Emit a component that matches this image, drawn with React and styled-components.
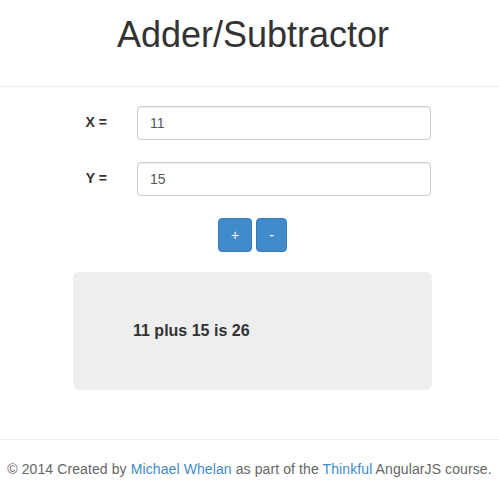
import React from "react";
import styled, { createGlobalStyle } from "styled-components";

const Global = createGlobalStyle`
  html, body { margin: 0; padding: 0; background: #fff; }
  body {
    font-family: "Liberation Sans", Arial, Helvetica, sans-serif;
    font-size: 14px;
    line-height: 1.428571;
    color: #333;
  }
  * { box-sizing: border-box; }
`;

const Header = styled.header`
  padding: 15px 0 31px 7px;
  border-bottom: 1px solid #eee;
  text-align: center;
`;

const Title = styled.h1`
  margin: 0;
  font-size: 36px;
  line-height: 40px;
  font-weight: 400;
  color: #333;
`;

const Page = styled.div`
  padding-left: 6px;
`;

const Main = styled.main`
  width: 359px;
  margin: 0 auto;
  padding-top: 19px;
  display: flex;
  flex-direction: column;
  gap: 22px;
`;

const Row = styled.div`
  display: flex;
  align-items: center;
  gap: 30px;
`;

const Label = styled.label`
  width: 34px;
  text-align: right;
  font-weight: 700;
  font-size: 14px;
`;

const Input = styled.input`
  width: 294px;
  height: 34px;
  padding: 6px 12px;
  border: 1px solid #ccc;
  border-radius: 4px;
  font-family: inherit;
  font-size: 14px;
  color: #555;
  box-shadow: inset 0 1px 1px rgba(0, 0, 0, 0.075);
  outline: none;
`;

const Buttons = styled.div`
  display: flex;
  justify-content: center;
  gap: 4px;
`;

const Button = styled.button`
  height: 34px;
  padding: 6px 12px;
  border: 1px solid #357ebd;
  border-radius: 4px;
  background: #428bca;
  color: #fff;
  font-family: inherit;
  font-size: 14px;
  line-height: 20px;
  cursor: pointer;
`;

const Result = styled.div`
  margin-top: -2px;
  height: 118px;
  background: #eee;
  border-radius: 6px;
  padding-left: 60px;
  display: flex;
  align-items: center;
  font-size: 16px;
  font-weight: 700;
  color: #333;
`;

const Footer = styled.footer`
  margin-top: 49px;
  border-top: 1px solid #eee;
  padding-top: 19px;
  text-align: center;
  color: #666;
  font-size: 14px;
  line-height: 20px;
  letter-spacing: 0.1px;
`;

const Link = styled.a`
  color: #428bca;
  text-decoration: none;
`;

export default function App() {
  return (
    <>
      <Global />
      <Header>
        <Title>Adder/Subtractor</Title>
      </Header>
      <Page>
        <Main>
          <Row>
            <Label>X =</Label>
            <Input defaultValue="11" />
          </Row>
          <Row>
            <Label>Y =</Label>
            <Input defaultValue="15" />
          </Row>
          <Buttons>
            <Button>+</Button>
            <Button>-</Button>
          </Buttons>
          <Result>11 plus 15 is 26</Result>
        </Main>
      </Page>
      <Footer>
        © 2014 Created by <Link href="#">Michael Whelan</Link> as part of the{" "}
        <Link href="#">Thinkful</Link> AngularJS course.
      </Footer>
    </>
  );
}
